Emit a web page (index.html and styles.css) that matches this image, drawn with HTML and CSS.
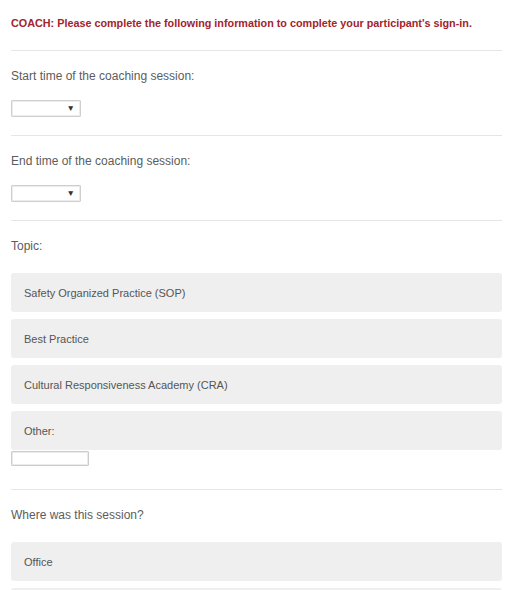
FILE: index.html
```html
<!DOCTYPE html>
<html>
<head>
<meta charset="utf-8">
<link rel="stylesheet" href="styles.css">
</head>
<body>
<div class="form">
  <p class="notice">COACH: Please complete the following information to complete your participant's sign-in.</p>

  <div class="section">
    <div class="label">Start time of the coaching session:</div>
    <span class="select-wrap"><select class="select"><option></option></select><span class="arrow">&#9660;</span></span>
  </div>

  <div class="section">
    <div class="label">End time of the coaching session:</div>
    <span class="select-wrap"><select class="select"><option></option></select><span class="arrow">&#9660;</span></span>
  </div>

  <div class="section section-topic">
    <div class="label label-list">Topic:</div>
    <div class="choices">
      <div class="choice">Safety Organized Practice (SOP)</div>
      <div class="choice">Best Practice</div>
      <div class="choice">Cultural Responsiveness Academy (CRA)</div>
      <div class="choice">Other:</div>
    </div>
    <input class="other-input" type="text">
  </div>

  <div class="section section-last">
    <div class="label label-list">Where was this session?</div>
    <div class="choices">
      <div class="choice">Office</div>
      <div class="choice"></div>
    </div>
  </div>
</div>
</body>
</html>
```

FILE: styles.css
```css
html, body {
  margin: 0;
  padding: 0;
  background: #ffffff;
}

body {
  font-family: "Liberation Sans", Arial, sans-serif;
  color: #5a5a5a;
}

.form {
  padding: 0 14px 0 11px;
}

.notice {
  margin: 0;
  padding: 17px 0 21px;
  font-size: 10.8px;
  line-height: 12px;
  font-weight: bold;
  color: #a3242b;
  border-bottom: 1px solid #e6e6e6;
}

.section {
  padding: 18px 0 17px;
  border-bottom: 1px solid #e6e6e6;
}

.section-topic {
  padding-bottom: 23px;
}

.section-last {
  border-bottom: none;
}

.label {
  font-size: 12px;
  line-height: 14px;
  color: #5c5c5c;
  margin-bottom: 17px;
}

.label-list {
  margin-bottom: 20px;
}

.select-wrap {
  position: relative;
  display: inline-block;
  width: 70px;
  height: 17px;
  vertical-align: top;
}

.select {
  -webkit-appearance: none;
  appearance: none;
  display: block;
  width: 70px;
  height: 17px;
  margin: 0;
  padding: 0;
  border: 1px solid #cfcfcf;
  box-shadow: inset 0 0 0 1px #ececec;
  border-radius: 1px;
  background: #ffffff;
  font-size: 10px;
}

.arrow {
  position: absolute;
  right: 6px;
  top: 4px;
  font-size: 8.5px;
  line-height: 9px;
  color: #333333;
  pointer-events: none;
}

.choices {
  display: flex;
  flex-direction: column;
  gap: 7px;
}

.choice {
  height: 39px;
  display: flex;
  align-items: center;
  padding-left: 13px;
  background: #efefef;
  border-radius: 3px;
  font-size: 11px;
  color: #555555;
}

.other-input {
  display: block;
  box-sizing: border-box;
  width: 78px;
  height: 15px;
  margin: 1px 0 0;
  padding: 0;
  border: 1px solid #cccccc;
  box-shadow: inset 0 0 0 1px #ebebeb;
  border-radius: 1px;
  background: #ffffff;
}
```
